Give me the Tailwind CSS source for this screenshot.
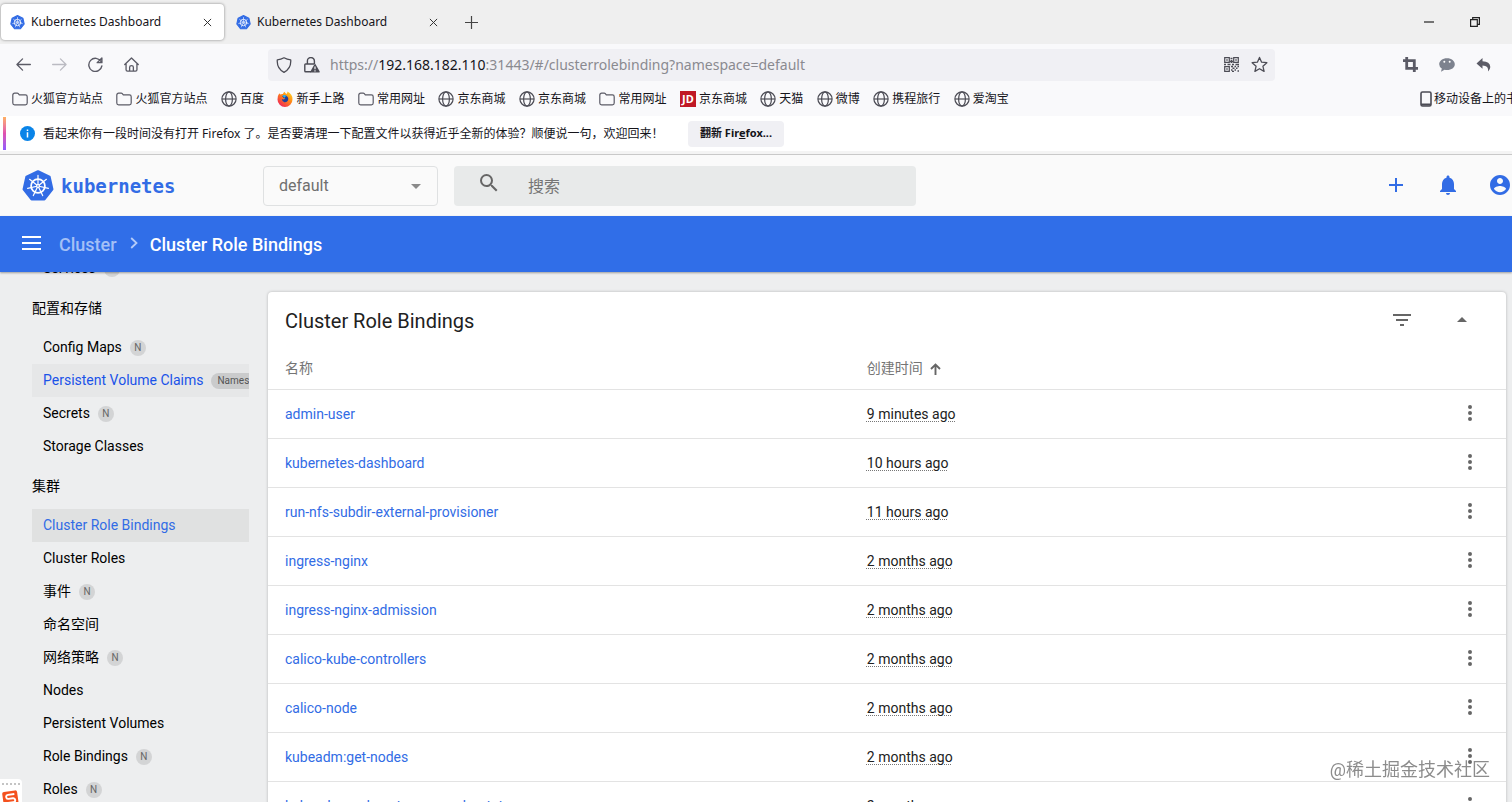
<!DOCTYPE html>
<html lang="zh-CN">
<head>
<meta charset="utf-8">
<title>Kubernetes Dashboard</title>
<script src="https://cdn.jsdelivr.net/npm/@tailwindcss/browser@4"></script>
</head>
<body class="flex h-screen flex-col overflow-hidden bg-[#edeeef] font-['Roboto','Noto_Sans_CJK_SC',sans-serif] text-[14px] text-black">
<svg class="absolute size-0" aria-hidden="true">
  <symbol id="k8s" viewBox="0 0 24 24">
    <path d="M12 1 20.6 5.1 22.7 14.4 16.8 21.9H7.2L1.3 14.4 3.4 5.1Z" fill="#326ce5" stroke="#326ce5" stroke-width="1.8" stroke-linejoin="round"/>
    <g fill="none" stroke="#fff" stroke-width="1.1" stroke-linecap="round">
      <circle cx="12" cy="12" r="5.2" stroke-width="1.3"/>
      <path d="M12 12V4M12 12 18.3 7M12 12 19.8 13.8M12 12 15.5 19.2M12 12 8.5 19.2M12 12 4.2 13.8M12 12 5.7 7" stroke-width=".9"/>
    </g>
    <circle cx="12" cy="12" r="1.5" fill="#fff"/><circle cx="12" cy="12" r=".6" fill="#326ce5"/>
  </symbol>
  <symbol id="close" viewBox="0 0 10 10"><path d="M1 1 9 9M9 1 1 9" stroke="#333" stroke-width="1.1" fill="none"/></symbol>
  <symbol id="folder" viewBox="0 0 16 16"><path d="M.8 4A1.8 1.8 0 0 1 2.600 2.200H5.200Q5.900 2.200 6.300 2.700L7.300 3.900H13.400A1.800 1.800 0 0 1 15.200 5.700V12A1.800 1.800 0 0 1 13.400 13.800H2.600A1.800 1.800 0 0 1 .8 12Z" fill="none" stroke="#5b5b66" stroke-width="1.2"/></symbol>
  <symbol id="globe" viewBox="0 0 16 16"><g fill="none" stroke="#4c4c55" stroke-width="1.2"><circle cx="8" cy="8" r="7.100"/><ellipse cx="8" cy="8" rx="3.400" ry="7.100"/><path d="M1 8H15"/></g></symbol>
  <linearGradient id="ffg" x1="1" y1="0" x2=".2" y2="1"><stop offset="0" stop-color="#ffe226"/><stop offset=".45" stop-color="#ff8a16"/><stop offset="1" stop-color="#f0205a"/></linearGradient>
  <symbol id="firefox" viewBox="0 0 16 16">
    <path d="M2.300 2.200Q2.700 3.100 3.500 3.500Q4.500 2.800 5.900 3.100Q6.200 1.500 7.600.8Q8 2 9.600 3Q10.600 2 10.400.6Q15.500 3 15.500 8.400A7.500 7.500 0 0 1 .5 8.400Q.5 4.500 2.300 2.200Z" fill="url(#ffg)"/>
    <path d="M5.200 5.300Q7.500 3.500 10 5.200Q12 6.900 11.100 9.300Q9.900 11.700 7.400 11.300Q4.900 10.600 4.900 8.100Q6.500 9 8.300 7.500Q6 7.300 5.200 5.300Z" fill="#20409a"/>
    <path d="M5.500 4.500Q8 3.400 9.500 5.200Q7.500 5.300 7.800 6.700Q7 6.900 5.500 4.500Z" fill="#29b6f0"/>
  </symbol>
  <symbol id="dots" viewBox="0 0 24 24"><path d="M12 8a2 2 0 1 0 0-4 2 2 0 0 0 0 4zm0 2a2 2 0 1 0 0 4 2 2 0 0 0 0-4zm0 6a2 2 0 1 0 0 4 2 2 0 0 0 0-4z"/></symbol>
</svg>

<!-- Browser window -->
<div class="shrink-0 font-['Noto_Sans','Noto_Sans_CJK_SC',sans-serif] text-[12px] text-[#15141a]">
  <div class="flex h-11 items-center bg-[#efefef] pl-px">
    <div class="flex h-9 w-[223px] items-center rounded bg-white pl-[9px] pr-3 shadow-[0_0_3px_rgba(0,0,0,0.45)]">
      <svg class="size-[15px]"><use href="#k8s"/></svg><span class="ml-1.5">Kubernetes Dashboard</span>
      <button class="ml-auto" aria-label="关闭标签页"><svg class="size-[9px]"><use href="#close"/></svg></button>
    </div>
    <div class="flex h-9 w-[226px] items-center pl-3 pr-3">
      <svg class="size-[15px]"><use href="#k8s"/></svg><span class="ml-1.5">Kubernetes Dashboard</span>
      <button class="ml-auto" aria-label="关闭标签页"><svg class="size-[9px]"><use href="#close"/></svg></button>
    </div>
    <button class="ml-[15px]" aria-label="新标签页"><svg class="size-[13px]" viewBox="0 0 13 13"><path d="M6.500 0V13M0 6.500H13" stroke="#444" stroke-width="1.200"/></svg></button>
    <button class="ml-auto" aria-label="最小化"><svg class="h-[10px] w-[10px]" viewBox="0 0 10 10"><path d="M0 5H10" stroke="#222" stroke-width="1.200"/></svg></button>
    <button class="ml-9 mr-8" aria-label="还原"><svg class="size-[10px]" viewBox="0 0 10 10"><path d="M.6 2.700H7.300V9.400H.6ZM2.700 2.700V.6H9.400V7.300H7.300" fill="none" stroke="#222" stroke-width="1.200"/></svg></button>
  </div>

  <div class="flex h-[42px] items-center bg-[#f9f9fb] pb-px pl-4 pr-[21px]">
    <div class="flex gap-[21px] text-[#5b5b66]">
      <button aria-label="后退"><svg class="size-[15px]" viewBox="0 0 16 16" fill="none" stroke="currentColor" stroke-width="1.400" stroke-linecap="round" stroke-linejoin="round"><path d="M15.300 8H1M7 2 1 8 7 14"/></svg></button>
      <button class="text-[#bbbbc2]" aria-label="前进"><svg class="size-[15px]" viewBox="0 0 16 16" fill="none" stroke="currentColor" stroke-width="1.400" stroke-linecap="round" stroke-linejoin="round"><path d="M.7 8H15M9 2 15 8 9 14"/></svg></button>
      <button aria-label="刷新"><svg class="size-[15px]" viewBox="0 0 16 16" fill="none" stroke="currentColor" stroke-width="1.500" stroke-linecap="round" stroke-linejoin="round"><path d="M14 5A7 7 0 1 0 14.800 9.500M14.800 1V6H9.800Z"/></svg></button>
      <button aria-label="主页"><svg class="size-[15px]" viewBox="0 0 16 16" fill="none" stroke="currentColor" stroke-width="1.400" stroke-linejoin="round" stroke-linecap="round"><path d="M.8 8 8 1 15.200 8M2.200 7V13.500Q2.200 15 3.700 15H12.300Q13.800 15 13.800 13.500V7M6 15V10.800Q6 9.200 8 9.200T10 10.800V15"/></svg></button>
    </div>
    <div class="ml-[129px] mr-[128px] flex h-8 min-w-0 flex-1 items-center rounded bg-[#f0f0f4] pl-2 pr-[7px]">
      <svg class="size-4" viewBox="0 0 16 16"><path d="M8 .8Q11 2.600 14.700 2.800Q15.400 11.500 8 15.300Q.6 11.500 1.300 2.800Q5 2.600 8 .8Z" fill="none" stroke="#4c4c55" stroke-width="1.300" stroke-linejoin="round"/></svg>
      <svg class="ml-3 size-4" viewBox="0 0 16 16"><path d="M3.400 7V4A3.500 3.500 0 0 1 10.400 4V7M7 14.800H1.600Q.8 14.800.8 14V7.800Q.8 7 1.600 7H10" fill="none" stroke="#4c4c55" stroke-width="1.400"/><path d="M11 6.800Q11.400 6.800 11.700 7.400L15.700 14.600Q16 15.600 15.200 15.600H7Q6 15.600 6.400 14.600L10.300 7.400Q10.600 6.800 11 6.800Z" fill="#4c4c55"/><path d="M11 9.500V12.300M11 13.300V14.400" stroke="#f0f0f4" stroke-width="1.200"/></svg>
      <div role="textbox" aria-label="地址栏" contenteditable="true" class="ml-2.5 min-w-0 flex-1 truncate text-[14px] text-[#8a8a90]">https://<span class="text-[#15141a]">192.168.182.110</span>:31443/#/clusterrolebinding?namespace=default</div>
      <button aria-label="二维码"><svg class="size-[15px]" viewBox="0 0 15 15" fill="none" stroke="#4c4c55" stroke-width="1.200"><path d="M.7.7H5.300V5.300H.7ZM9.700.7H14.300V5.300H9.700ZM.7 9.700H5.300V14.300H.7Z"/><path d="M2.300 3H3.700M11.300 3H12.700M2.300 12H3.700M6.500 1.500H8.500M7.500 3V6M6 4.500H9M0 7.500H2M3.500 7.500H6.500M8 7.500H10M11.500 7.500H15M7 9.500H9M10.500 9.500H12M13.500 9.500H15M8.500 11.200H10.500M12 11.200H13.500M7 13H8.500M10.500 13H12M13.500 14H15M8 14.500H10" stroke-width="1.500"/></svg></button>
      <button class="ml-3" aria-label="添加书签"><svg class="size-[17px]" viewBox="0 0 24 24"><path d="M12 2 15 8.800 22.400 9.500 16.800 14.400 18.500 21.700 12 17.900 5.500 21.700 7.200 14.400 1.600 9.500 9 8.800Z" fill="none" stroke="#4c4c55" stroke-width="1.800" stroke-linejoin="round"/></svg></button>
    </div>
    <div class="flex items-center gap-[21px] text-[#5b5b66]">
      <button aria-label="截图"><svg class="size-[15px]" viewBox="0 0 15 15"><path d="M3.700 0V11.300H15M0 3.700H11.300V15" fill="none" stroke="currentColor" stroke-width="2.800"/></svg></button>
      <button class="text-[#7d828e]" aria-label="消息"><svg class="size-4" viewBox="0 0 16 16"><path d="M8 1.200C12.500 1.200 15.800 3.900 15.800 7.200S12.500 13 8 13Q6.700 13 5.500 12.700L2 14.800 2.800 11.500Q.2 9.800.2 7.200C.2 3.900 3.500 1.200 8 1.200Z" fill="currentColor"/><circle cx="5.300" cy="4.800" r="1" fill="#fff"/><circle cx="10.700" cy="4.800" r="1" fill="#fff"/></svg></button>
      <button aria-label="撤销"><svg class="size-[15px]" viewBox="0 0 15 15"><path d="M6.500 1V4.300Q14 4.500 14.300 10Q14.300 12.500 12 14.500Q13 8.500 6.500 8.500V11.800L.5 6.400Z" fill="currentColor"/></svg></button>
    </div>
  </div>

  <div class="flex h-[30px] items-center overflow-hidden bg-[#f9f9fb] pb-1 pl-3 whitespace-nowrap">
    <nav id="bookmarks" class="flex w-[997px] shrink-0 justify-between" aria-label="书签"></nav>
    <a href="#" class="ml-auto flex w-[92px] items-center gap-0.5"><svg class="h-4 w-3 shrink-0" viewBox="0 0 12 16"><rect x="1" y="1" width="10" height="14" rx="1.500" fill="none" stroke="#4c4c55" stroke-width="1.600"/><path d="M1 13.500H11" stroke="#4c4c55" stroke-width="2"/></svg>移动设备上的书签</a>
  </div>

  <div class="flex h-[35px] items-center bg-white">
    <div class="ml-[3px] h-[33px] w-[3px] bg-linear-to-b from-[#ffb060] via-[#e050b0] to-[#9059ff]"></div>
    <svg class="ml-3.5 size-[15px]" viewBox="0 0 15 15"><circle cx="7.500" cy="7.500" r="7.500" fill="#0a84e8"/><path d="M7.500 6.300V11.500M7.500 3.500V5" stroke="#fff" stroke-width="1.500"/></svg>
    <p class="ml-2 min-w-[645px]">看起来你有一段时间没有打开 Firefox 了。是否要清理一下配置文件以获得近乎全新的体验？顺便说一句，欢迎回来！</p>
    <button class="h-[26px] rounded bg-[#f0f0f4] px-3 text-[11px] font-bold">翻新 Fir<u>e</u>fox...</button>
  </div>
  <div class="h-1 border-b border-[#c9c9c9] bg-[#f4f4f4]"></div>
</div>

<!-- Dashboard header -->
<header class="flex h-[61px] shrink-0 items-center bg-[#fafafa] pl-[22px]">
  <a href="#" class="flex w-[241px] items-center text-[#326ce5]">
    <svg class="size-8"><use href="#k8s"/></svg>
    <span class="ml-[7px] pt-0.5 font-['DejaVu_Sans_Mono',monospace] text-[19px] font-bold">kubernetes</span>
  </a>
  <div class="relative w-[175px]">
    <select aria-label="命名空间" class="h-10 w-full appearance-none rounded-sm border border-[#dfe1e2] bg-[#fafafa] pl-[15px] text-[16px] text-[#6f6f6f]"><option>default</option></select>
    <svg class="pointer-events-none absolute top-[18px] right-[17px] h-[5px] w-[10px]" viewBox="0 0 10 5"><path d="M0 0H10L5 5Z" fill="#8a8a8a"/></svg>
  </div>
  <label class="ml-4 flex h-10 w-[462px] items-center rounded-sm bg-[#e8eaea] pl-[23px]">
    <svg class="mb-1.5 size-6 shrink-0 fill-[#666]" viewBox="0 0 24 24"><path d="M15.500 14h-.79l-.28-.27A6.471 6.471 0 0 0 16 9.500 6.500 6.500 0 1 0 9.500 16c1.610 0 3.090-.59 4.230-1.570l.27.28v.79l5 4.990L20.490 19l-4.990-5zm-6 0C7.010 14 5 11.990 5 9.500S7.010 5 9.500 5 14 7.010 14 9.500 11.990 14 9.500 14z"/></svg>
    <input type="search" placeholder="搜索" aria-label="搜索" class="ml-[27px] min-w-0 flex-1 bg-transparent pt-0.5 text-[16px] outline-none placeholder:text-[#757575]">
  </label>
  <div class="ml-auto flex gap-7 pb-0.5 text-[#326ce5]">
    <button aria-label="新建"><svg class="size-6 fill-current" viewBox="0 0 24 24"><path d="M19 13h-6v6h-2v-6H5v-2h6V5h2v6h6v2z"/></svg></button>
    <button aria-label="通知"><svg class="size-6 fill-current" viewBox="0 0 24 24"><path d="M12 22c1.100 0 2-.9 2-2h-4a2 2 0 0 0 2 2zm6-6v-5c0-3.070-1.640-5.640-4.500-6.320V4c0-.83-.67-1.500-1.500-1.500s-1.500.67-1.500 1.500v.68C7.630 5.360 6 7.920 6 11v5l-2 2v1h16v-1l-2-2z"/></svg></button>
    <button aria-label="用户"><svg class="size-6 fill-current" viewBox="0 0 24 24"><path d="M12 2C6.480 2 2 6.480 2 12s4.480 10 10 10 10-4.480 10-10S17.520 2 12 2zm0 3c1.660 0 3 1.340 3 3s-1.340 3-3 3-3-1.340-3-3 1.340-3 3-3zm0 14.200c-2.500 0-4.710-1.280-6-3.220.03-1.990 4-3.080 6-3.080 1.990 0 5.970 1.090 6 3.080-1.290 1.940-3.500 3.220-6 3.220z"/></svg></button>
  </div>
</header>

<div class="z-10 flex h-14 shrink-0 items-center bg-[#306ee8] pl-[22px] text-[18px] font-medium text-white shadow-[0_1px_2px_rgba(0,0,0,0.35)]">
  <button aria-label="菜单"><svg class="mb-0.5 h-[14px] w-[19px]" viewBox="0 0 19 14"><path d="M0 1H19M0 7H19M0 13H19" stroke="#fff" stroke-width="2"/></svg></button>
  <a href="#" class="ml-[18px] text-[#a4c0f6]">Cluster</a>
  <svg class="ml-[13px] mr-3 mb-0.5 h-3 w-2" viewBox="0 0 8 12"><path d="M1.200 1 6.500 6 1.200 11" fill="none" stroke="#b4cbf8" stroke-width="1.800"/></svg>
  <h1>Cluster Role Bindings</h1>
</div>

<div class="flex min-h-0 flex-1 overflow-hidden">
  <!-- The list is scrolled a little way down -->
  <aside class="w-[268px] shrink-0 overflow-hidden pl-8 pr-[19px]">
    <nav id="side" class="-mt-5"></nav>
  </aside>
  <main class="min-w-0 flex-1 pt-5 pr-1.5">
    <section class="rounded-t bg-white shadow-[0_0_3px_rgba(0,0,0,0.25)]">
      <div class="flex h-[57px] items-center pl-[17px] pr-8">
        <h2 class="text-[20px] text-[#212121]">Cluster Role Bindings</h2>
        <button class="ml-auto" aria-label="筛选"><svg class="mb-0.5 h-3 w-[18px]" viewBox="0 0 18 12"><path d="M0 1H18M3 6H15M7 11H11" stroke="#666" stroke-width="2"/></svg></button>
        <button class="ml-[39px] w-6" aria-label="折叠"><svg class="mx-auto mb-0.5 h-[5px] w-[10px]" viewBox="0 0 10 5"><path d="M0 5H10L5 0Z" fill="#666"/></svg></button>
      </div>
      <table class="w-full table-fixed text-left">
        <thead>
          <tr class="h-10 border-b border-[#e3e3e3] text-[#757575]">
            <th class="w-[47%] pl-[17px] font-normal">名称</th>
            <th class="pl-[17px] font-normal"><span class="flex items-center gap-[7px]">创建时间 <svg class="h-3 w-[11px]" viewBox="0 0 11 12"><path d="M5.500 12V1.500M1 6 5.500 1.500 10 6" fill="none" stroke="#666" stroke-width="1.900"/></svg></span></th>
            <th class="w-[72px]"><span class="sr-only">操作</span></th>
          </tr>
        </thead>
        <tbody id="rows"></tbody>
      </table>
    </section>
  </main>
</div>

<!-- Input method bar and watermark, floating over the page -->
<div class="fixed bottom-0 left-0 z-20 flex h-[23px] w-[22px] flex-col overflow-hidden rounded-tr bg-white">
  <div class="mx-0.5 mt-1 border-t-2 border-dotted border-[#c4c4c4]"></div>
  <svg class="mt-1 ml-0.5 h-4 w-[18px] shrink-0" viewBox="0 0 18 16"><g transform="rotate(-8 9 10)"><rect x="1" y="2" width="15" height="18" rx="2" fill="#f4511e"/><path d="M13 5.500H6.500Q4.500 5.500 4.500 7.500T6.500 9.500H11Q13 9.500 13 11.500T11 13.500H4" fill="none" stroke="#fff" stroke-width="1.900"/></g></svg>
</div>
<div class="pointer-events-none fixed right-[22px] bottom-5 z-20 text-[18px] leading-6 text-[#8c8c8c]">@稀土掘金技术社区</div>

<script>
const icon = {
  folder: '<svg class="size-4 shrink-0"><use href="#folder"/></svg>',
  globe: '<svg class="size-4 shrink-0"><use href="#globe"/></svg>',
  firefox: '<svg class="size-4 shrink-0"><use href="#firefox"/></svg>',
  jd: '<span class="flex size-4 shrink-0 items-center justify-center bg-[#c01825] text-[11px] font-bold text-white">JD</span>'
};
document.getElementById('bookmarks').innerHTML = [
  ['folder','火狐官方站点'],['folder','火狐官方站点'],['globe','百度'],['firefox','新手上路'],['folder','常用网址'],
  ['globe','京东商城'],['globe','京东商城'],['folder','常用网址'],['jd','京东商城'],['globe','天猫'],['globe','微博'],['globe','携程旅行'],['globe','爱淘宝']
].map(([i, t]) => `<a href="#" class="flex items-center gap-[3px]">${icon[i]}${t}</a>`).join('');

const badge = '<span class="ml-2 flex size-4 items-center justify-center rounded-full bg-[#d3d4d5] text-[10px] text-[#666]">N</span>';
const item = (t, b) => `<a href="#" class="flex h-[33px] items-center pl-[11px]">${t}${b ? badge : ''}</a>`;
const head = t => `<h3 class="flex h-[46px] items-center">${t}</h3>`;
document.getElementById('side').innerHTML = [
  item('Services', 1), head('配置和存储'), item('Config Maps', 1),
  '<a href="#" class="flex h-[33px] items-center overflow-hidden bg-[#e6e7e8] pl-[11px] whitespace-nowrap text-[#1a53e8]">Persistent Volume Claims<span class="ml-2 flex h-4 shrink-0 items-center rounded-full bg-[#cacbcc] px-1.5 text-[10px] text-[#555]">Namespaced</span></a>',
  item('Secrets', 1), item('Storage Classes'), head('集群'),
  '<a href="#" class="flex h-[33px] items-center bg-[#e0e1e1] pl-[11px] text-[#326ce5]">Cluster Role Bindings</a>',
  item('Cluster Roles'), item('事件', 1), item('命名空间'), item('网络策略', 1), item('Nodes'),
  item('Persistent Volumes'), item('Role Bindings', 1), item('Roles', 1)
].join('');

document.getElementById('rows').innerHTML = [
  ['admin-user','9 minutes ago'],['kubernetes-dashboard','10 hours ago'],['run-nfs-subdir-external-provisioner','11 hours ago'],
  ['ingress-nginx','2 months ago'],['ingress-nginx-admission','2 months ago'],['calico-kube-controllers','2 months ago'],
  ['calico-node','2 months ago'],['kubeadm:get-nodes','2 months ago'],['kubeadm:node-autoapprove-bootstrap','2 months ago']
].map(([n, t]) => `<tr class="h-[49px] border-b border-[#e3e3e3]">
  <td class="pt-0.5 pl-[17px]"><a href="#" class="text-[#326ce5]">${n}</a></td>
  <td class="pt-0.5 pl-[17px] text-[#212121]"><span class="underline decoration-[#777] decoration-dotted decoration-1 underline-offset-2">${t}</span></td>
  <td class="pb-0.5 text-center"><button class="align-middle" aria-label="更多操作"><svg class="size-6 fill-[#666]"><use href="#dots"/></svg></button></td></tr>`).join('');
</script>
</body>
</html>
